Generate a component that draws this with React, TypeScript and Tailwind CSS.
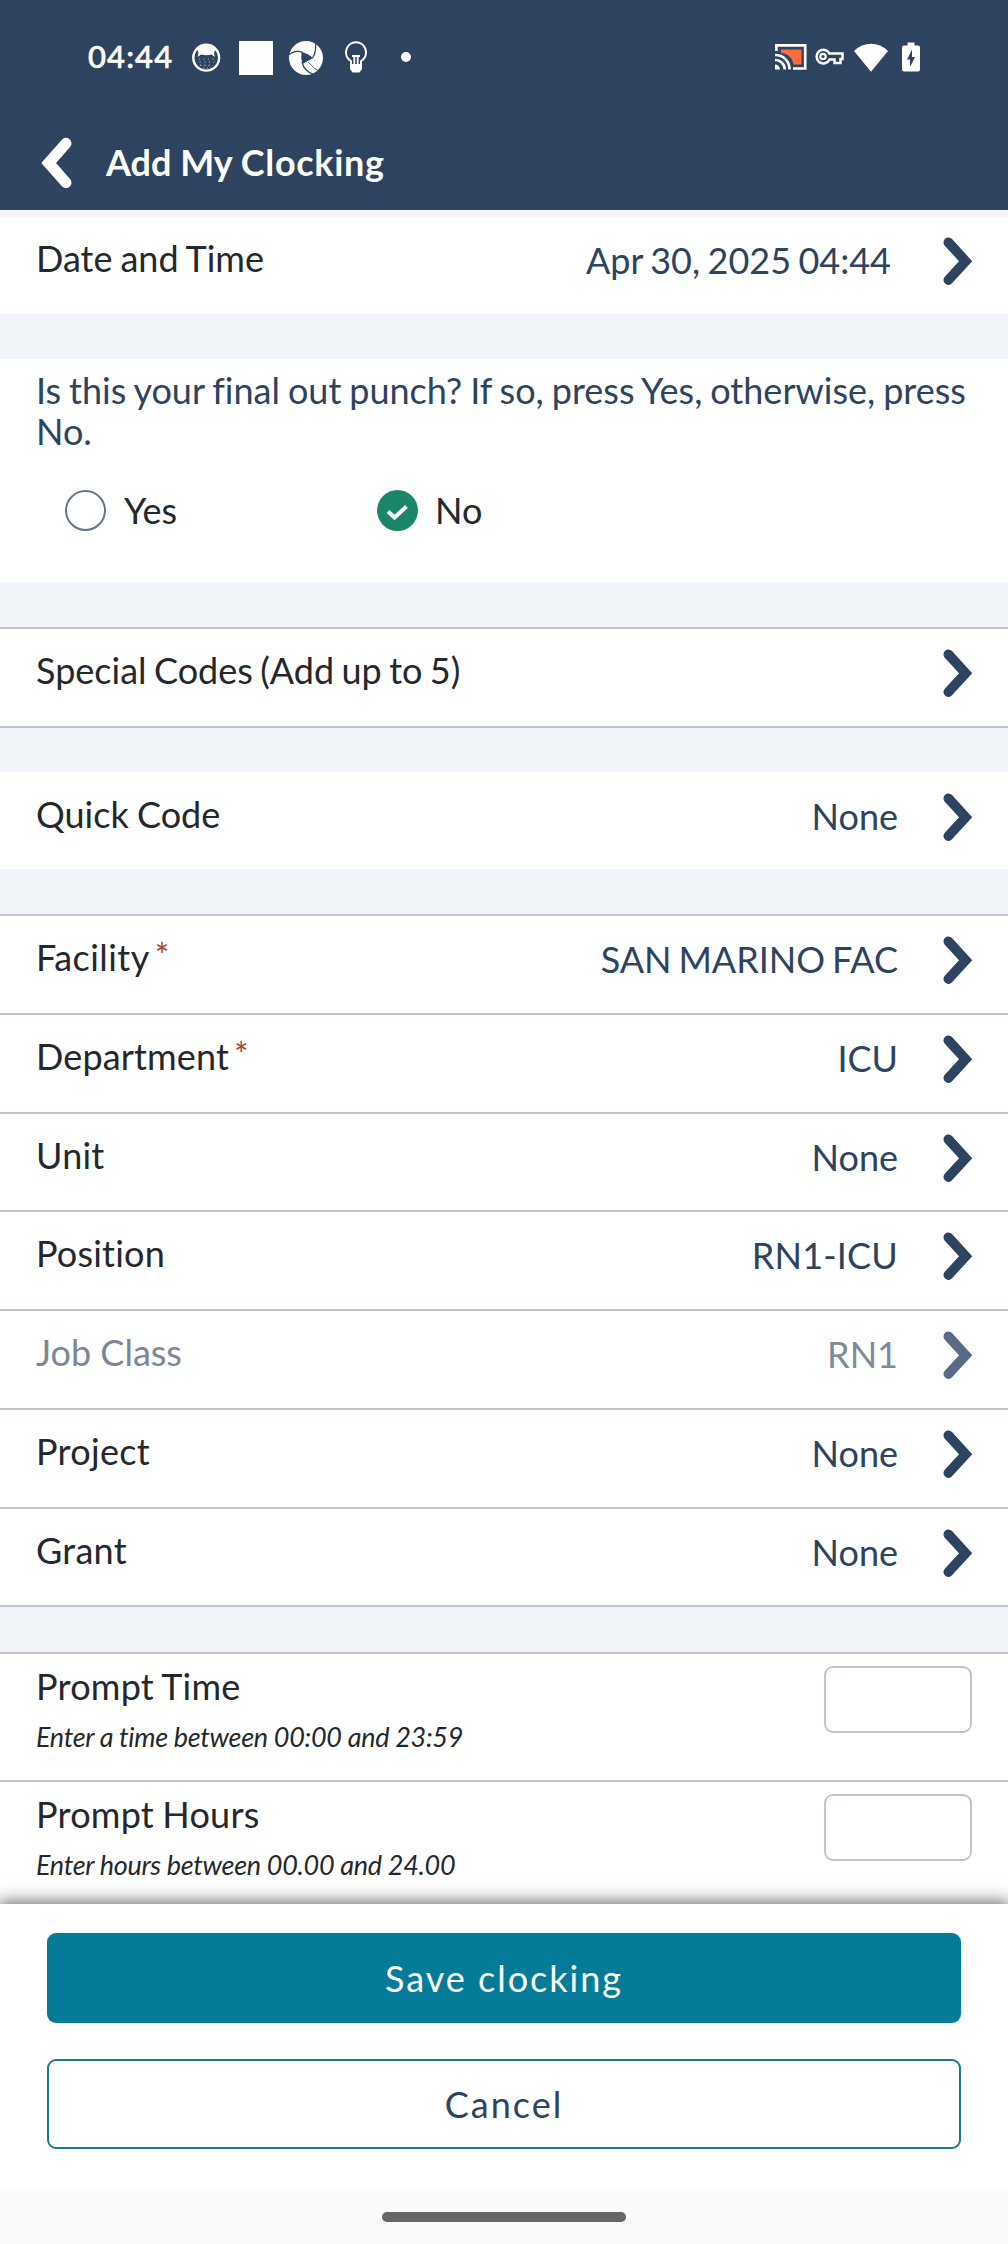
import React from "react";

function Chevron({ className = "" }: { className?: string }) {
  return (
    <svg className={`h-12 w-[30px] ${className}`} viewBox="0 0 30 48" fill="none" stroke="currentColor" strokeWidth="9.8" strokeLinecap="round">
      <path d="M5.4 5.4 L22.6 24.2 L5.4 43" />
    </svg>
  );
}

function StatusBar() {
  return (
    <div className="flex h-[116px] items-center justify-between pl-[88px] pr-[88px]">
      <div className="flex items-center">
        <span className="w-[104px] pb-[3px] text-[31px] font-medium leading-none tracking-[1.1px] text-white [-webkit-text-stroke:0.6px_white]">04:44</span>
        <svg className="h-[30px] w-[29px]" viewBox="0 0 29 30">
          <circle cx="14.2" cy="14.7" r="12.9" fill="none" stroke="white" strokeWidth="2.4" />
          <path d="M5 6 A12.5 12.5 0 0 1 23.5 6 L22 10 L22.8 14 L19.5 11.6 Q14.3 12.8 9 11.6 L5.7 14 L6.5 10Z" fill="white" />
          <g stroke="#9fadbf" strokeWidth="1.2" fill="none">
            <path d="M7 16 H22" strokeDasharray="1.2 3.2" />
            <path d="M5 19 H23" strokeDasharray="1.2 3.4" strokeDashoffset="2" />
            <path d="M8 22.3 H21" strokeDasharray="1.4 2.8" />
            <path d="M11 25 H19" strokeDasharray="1.4 2.2" />
          </g>
        </svg>
        <div className="ml-[18px] h-[34px] w-[34px] bg-white" />
        <svg className="ml-4 h-[34px] w-[34px]" viewBox="0 0 34 34">
          <circle cx="17" cy="17" r="17" fill="white" />
          <path d="M12.5 11 Q19 12.5 24 17 Q19 20 13.5 23 Q11.5 17 12.5 11Z" fill="#2d435f" />
          <g fill="none" stroke="#2d435f" strokeWidth="1.2">
            <path d="M0 13.5 Q6 8.5 14 11.5" />
            <path d="M26.3 1 Q28 10 23.5 17" />
            <path d="M24 33 Q15 30 13 21" />
            <path d="M32 31 Q26 29 19 21" strokeWidth="0.8" />
          </g>
        </svg>
        <svg className="ml-[22px] h-[34px] w-[22px]" viewBox="0 0 22 34" fill="none" stroke="white" strokeWidth="2">
          <path d="M6 24 V20 A10 10 0 1 1 16 20 V24" />
          <path d="M7 15 H15 M9.3 15 V24 M12.7 15 V24" strokeWidth="1.8" />
          <path d="M5 23 H17 V28 L14.5 31.5 H7.5 L5 28Z" fill="white" stroke="none" />
        </svg>
        <div className="mb-0.5 ml-[34px] h-2.5 w-2.5 rounded-full bg-white" />
      </div>
      <div className="mb-0.5 flex items-center">
        <svg className="h-[26px] w-8" viewBox="0 0 32 26" fill="none" stroke="white" strokeWidth="2.7">
          <path d="M6 5.5 H26.5 V20.5 H18.5 A13 13 0 0 0 6 9Z" fill="#ff6d3f" stroke="none" />
          <path d="M1.4 7 V1.4 H30.2 V24.5 H18" />
          <path d="M0 11 A14 14 0 0 1 14.5 25.5 M0 16 A9.5 9.5 0 0 1 9.8 25.5" />
          <path d="M0 20.5 A5 5 0 0 1 5 25.5 H0Z" fill="white" stroke="none" />
        </svg>
        <svg className="ml-2 h-[18px] w-[29px]" viewBox="0 0 29 18" fill="none" stroke="white" strokeWidth="2.5">
          <path d="M14.5 5.6 H27.5 V11 H25.5 V15 H19.5 V11.6 H14.5 A6.8 6.8 0 1 1 14.5 5.6Z" />
          <circle cx="8" cy="8.5" r="2.7" strokeWidth="2.2" />
        </svg>
        <svg className="ml-2.5 h-[29px] w-[34px]" viewBox="0 0 34 29">
          <path d="M0 8 Q7.5 0.8 17 0.8 T34 8 L17 28.8Z" fill="white" />
        </svg>
        <svg className="ml-[14px] h-[30px] w-[18px]" viewBox="0 0 18 30">
          <path d="M5.5 0.5 H12.5 V3.5 H16 Q18 3.5 18 5.5 V27.5 Q18 29.5 16 29.5 H2 Q0 29.5 0 27.5 V5.5 Q0 3.5 2 3.5 H5.5Z" fill="white" />
          <path d="M10 7.5 L5 17.5 H8 V25 L13 15 H10Z" fill="#2d435f" />
        </svg>
      </div>
    </div>
  );
}

type RowProps = {
  label: string;
  labelClass?: string;
  value?: string;
  valueClass?: string;
  required?: boolean;
  disabled?: boolean;
};

function Row({ label, labelClass = "", value, valueClass = "mr-[45px]", required, disabled }: RowProps) {
  return (
    <div className={`flex items-start pl-9 pr-[35px] ${disabled ? "text-[#7b8796]" : "text-[#24282c]"}`}>
      <div className="flex flex-1 pt-[19px] text-[36px] leading-[44px]">
        <span className={labelClass}>{label}</span>
        {required && <span className="ml-[5px] mt-[-2px] text-[34px] text-[#a4472b]">*</span>}
      </div>
      <span className={`pt-[21px] text-[36px] leading-[44px] ${valueClass} ${disabled ? "text-[#7f8a9c]" : "text-[#2d435f]"}`}>{value}</span>
      <Chevron className={`mt-5 ${disabled ? "text-[#586a86]" : "text-[#2d435f]"}`} />
    </div>
  );
}

const assignments: RowProps[] = [
  { label: "Facility", labelClass: "tracking-[0.45px]", value: "SAN MARINO FAC", valueClass: "mr-[45px] [word-spacing:-2.4px]", required: true },
  { label: "Department", labelClass: "tracking-[0.15px]", value: "ICU", required: true },
  { label: "Unit", labelClass: "tracking-[0.2px]", value: "None" },
  { label: "Position", labelClass: "tracking-[0.2px]", value: "RN1-ICU", valueClass: "mr-[45px] tracking-[0.2px]" },
  { label: "Job Class", value: "RN1", disabled: true },
  { label: "Project", labelClass: "tracking-[0.3px]", value: "None" },
  { label: "Grant", labelClass: "tracking-[0.3px]", value: "None" },
];

function Prompt({ title, hint }: { title: string; hint: string }) {
  return (
    <div className="flex h-32 items-start justify-between border-t-2 border-[#c1c5cb] bg-white pl-9 pr-9 text-[#24282c]">
      <div>
        <div className="pt-2.5 text-[36px] leading-[44px] tracking-[0.25px] [word-spacing:-1.2px]">{title}</div>
        <div className="pt-3 text-[27px] italic leading-[34px] tracking-[-0.3px]">{hint}</div>
      </div>
      <input aria-label={title} className="mt-3 h-[67px] w-[148px] rounded-[9px] border-2 border-[#c1c5cb] bg-white" />
    </div>
  );
}

export default function App() {
  return (
    <div className="flex h-[2244px] w-[1008px] flex-col overflow-hidden bg-[#f1f5fa] font-['Lato',sans-serif] [font-variant-ligatures:none]">
      <header className="h-[210px] shrink-0 bg-[#2d435f]">
        <StatusBar />
        <div className="flex h-[94px] items-center pl-[40px] text-white">
          <svg className="h-[52px] w-8" viewBox="0 0 32 52" fill="none" stroke="white" strokeWidth="11" strokeLinecap="round">
            <path d="M26 6.3 L8.6 26 L26 45.7" />
          </svg>
          <h1 className="ml-[34px] pb-0.5 text-[36px] font-bold leading-[44px]">
            Add My <span className="tracking-[0.7px]">Clocking</span>
          </h1>
        </div>
      </header>
      <main className="flex h-[1694px] shrink-0 flex-col">
        <div className="mt-[7px] h-[97px] shrink-0 bg-white">
          <Row label="Date and Time" labelClass="[word-spacing:-1.2px]" value="Apr 30, 2025 04:44" valueClass="mr-[52px] [word-spacing:-1.8px]" />
        </div>
        <section className="mt-[45px] h-[223px] shrink-0 bg-white pl-9 pr-5 pt-[11px]">
          <p className="text-[36px] leading-[41px] text-[#2d435f] [word-spacing:-1.25px]">
            Is this your final out punch? If so, press Yes, otherwise, press No.
          </p>
          <div className="mt-[38px] flex h-[41px] items-center pl-[29px] text-[36px] leading-[41px] text-[#24282c]">
            <div className="flex w-[312px] items-center">
              <span className="h-[41px] w-[41px] rounded-full border-2 border-[#66748a]" />
              <span className="ml-[18px]">Yes</span>
            </div>
            <svg className="h-[41px] w-[41px]" viewBox="0 0 41 41">
              <circle cx="20.5" cy="20.5" r="20.5" fill="#1a8568" />
              <path d="M11 21.5 L17.5 27.5 L29.5 16.5" fill="none" stroke="white" strokeWidth="4" />
            </svg>
            <span className="ml-[17px]">No</span>
          </div>
        </section>
        <div className="mt-[45px] h-[101px] shrink-0 border-y-2 border-[#c1c5cb] bg-white">
          <Row label="Special Codes (Add up to 5)" labelClass="[word-spacing:-1.8px]" />
        </div>
        <div className="mt-11 h-[97px] shrink-0 bg-white pt-px">
          <Row label="Quick Code" labelClass="[word-spacing:-1px]" value="None" />
        </div>
        <section className="mt-[45px] shrink-0 border-b-2 border-[#c1c5cb]">
          {assignments.map((row) => (
            <div key={row.label} className="h-[98.75px] border-t-2 border-[#c1c5cb] bg-white">
              <Row {...row} />
            </div>
          ))}
        </section>
        <section className="mt-[44.75px] shrink-0">
          <Prompt title="Prompt Time" hint="Enter a time between 00:00 and 23:59" />
          <Prompt title="Prompt Hours" hint="Enter hours between 00.00 and 24.00" />
        </section>
      </main>
      <footer className="relative flex h-[287px] shrink-0 flex-col gap-9 bg-white px-[47px] pt-[29px] shadow-[0_0_16px_2px_rgba(0,0,0,0.6)]">
        <button className="h-[90px] rounded-[9px] bg-[#047c97] text-[36px] tracking-[2px] text-white">Save clocking</button>
        <button className="h-[90px] rounded-[9px] border-2 border-[#1f7888] text-[36px] tracking-[2px] text-[#2d435f]">Cancel</button>
      </footer>
      <nav className="relative flex h-[53px] shrink-0 justify-center bg-[#fafafa] pt-[21px]">
        <div className="h-2.5 w-[244px] rounded-full bg-[#666666]" />
      </nav>
    </div>
  );
}
